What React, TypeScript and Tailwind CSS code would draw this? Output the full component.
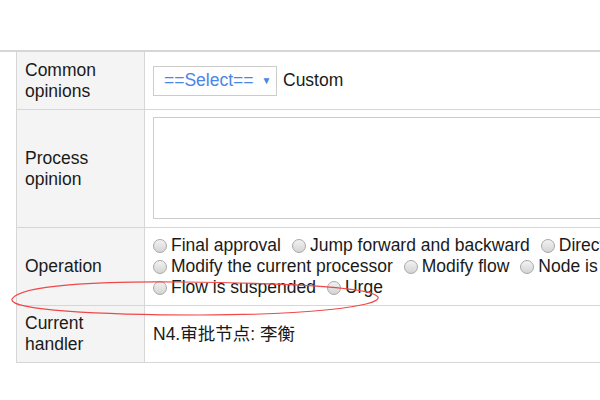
import React from "react";

const opLines: string[][] = [
  ["Final approval", "Jump forward and backward", "Direct delivery"],
  ["Modify the current processor", "Modify flow", "Node is suspended"],
  ["Flow is suspended", "Urge"],
];

function Radio({ label }: { label: string }) {
  return (
    <span className="flex items-center mr-[11px] whitespace-nowrap">
      <span className="w-[14px] h-[14px] rounded-full border border-[#a8a8a8] bg-gradient-to-b from-[#f2f2f2] to-[#d4d4d4] mr-[4px] shrink-0" />
      {label}
    </span>
  );
}

function Label({ children }: { children: React.ReactNode }) {
  return (
    <div className="w-[128px] shrink-0 bg-[#f4f4f4] border-r border-[#d6d6d6] px-[8px] flex items-center">
      <span>{children}</span>
    </div>
  );
}

export default function App() {
  return (
    <div className="w-[600px] h-[400px] overflow-hidden bg-white text-[17.5px] leading-[21px] text-[#1a1a1a] font-['Liberation_Sans','Noto_Sans_CJK_SC',sans-serif]">
      <div className="h-[50px]" />
      <div className="border-t-2 border-[#d6d6d6]" />
      <div className="ml-[16px] w-[720px] border-l border-b border-[#d6d6d6]">
        {/* Common opinions */}
        <div className="flex h-[57px]">
          <Label>
            Common
            <br />
            opinions
          </Label>
          <div className="flex-1 flex items-center px-[8px]">
            <div className="w-[124px] h-[30px] border border-[#cccccc] flex items-center pl-[10px] text-[#4a86e8]">
              ==Select==
              <span className="ml-[8px] text-[10px] leading-none">▼</span>
            </div>
            <span className="ml-[6px]">Custom</span>
          </div>
        </div>

        {/* Process opinion */}
        <div className="flex h-[118px] border-t border-[#d6d6d6]">
          <Label>
            Process
            <br />
            opinion
          </Label>
          <div className="flex-1 px-[8px] pt-[7px]">
            <div className="h-[102px] border border-[#cccccc]" />
          </div>
        </div>

        {/* Operation */}
        <div className="flex h-[78px] border-t border-[#d6d6d6]">
          <Label>Operation</Label>
          <div className="flex-1 px-[8px] py-[7px] flex flex-col">
            {opLines.map((line, i) => (
              <div key={i} className="flex h-[21px] items-center">
                {line.map((l) => (
                  <Radio key={l} label={l} />
                ))}
              </div>
            ))}
          </div>
        </div>

        {/* Current handler */}
        <div className="flex h-[57px] border-t border-[#d6d6d6]">
          <Label>
            Current
            <br />
            handler
          </Label>
          <div className="flex-1 flex items-center px-[8px]">N4.审批节点: 李衡</div>
        </div>
      </div>

      {/* hand-drawn annotation */}
      <svg className="absolute left-0 top-0 pointer-events-none" width="600" height="400">
        <path
          d="M12,299 C20,285 100,281 180,282 C280,283 372,287 378,297 C382,307 300,315 200,315 C100,315 8,310 12,299 Z"
          fill="none"
          stroke="#f04848"
          strokeWidth="1.2"
        />
      </svg>
    </div>
  );
}
